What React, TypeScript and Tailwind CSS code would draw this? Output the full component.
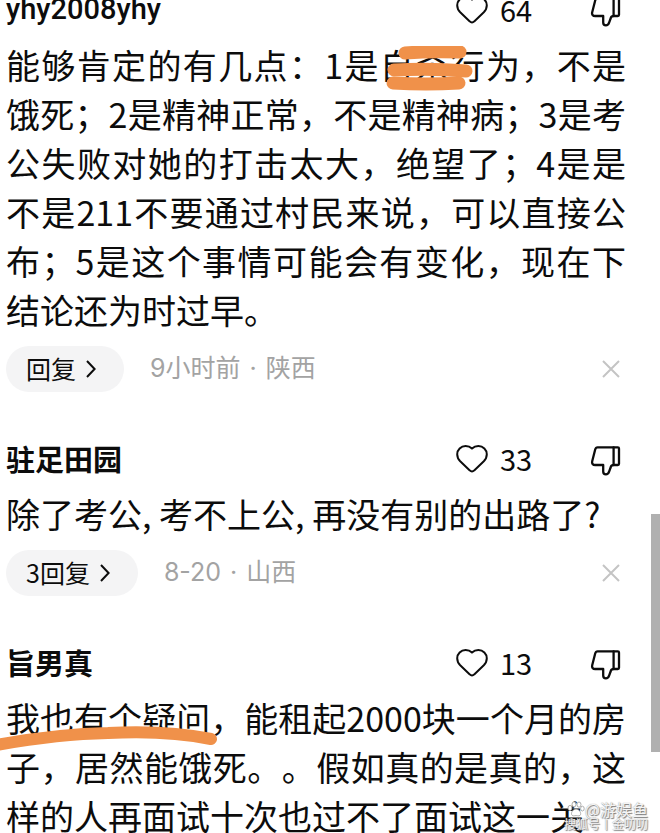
import type { ReactNode } from "react";
import { clsx } from "clsx";

interface Comment {
  author: string;
  likes: number;
  body: ReactNode;
  reply?: { label: string; time: string; region: string };
}

function HeartIcon() {
  return (
    <svg
      viewBox="0 0 32 28"
      className="h-7 w-8"
      fill="none"
      stroke="#0c0c0c"
      strokeWidth="2"
      strokeLinejoin="round"
    >
      <path d="M16 3.6C14.2 1.9 12 1.1 9.6 1.1C4.9 1.1 1.2 4.7 1.2 9.3C1.2 12 2.2 14.3 4.2 16.3L13.8 25.4C15.1 26.7 16.9 26.7 18.2 25.4L27.8 16.3C29.8 14.3 30.8 12 30.8 9.3C30.8 4.7 27.1 1.1 22.4 1.1C20 1.1 17.8 1.9 16 3.6Z" />
    </svg>
  );
}

function ThumbDownIcon() {
  return (
    <svg
      viewBox="0 0 32 32"
      className="size-8"
      fill="none"
      stroke="#0c0c0c"
      strokeWidth="2.3"
      strokeLinejoin="round"
      strokeLinecap="round"
    >
      <path d="M7.6 2.4H27.8C28.6 2.4 29 2.8 29 3.6V18.8C29 19.6 28.6 20 27.8 20H23.6C22 20 21.2 20.7 20.8 22L19.2 26.4C18.5 28.5 17.4 29.4 15.9 29.4C14.1 29.4 13.2 28.3 13.2 26.5V20H5.2C2.8 20 1.6 18.4 2.2 16.2L5.2 4.5C5.6 3 6.2 2.4 7.6 2.4Z" />
      <path d="M23.6 2.4V20" />
    </svg>
  );
}

function CommentItem({ author, likes, body, reply }: Comment) {
  const isLatin = /^[\w-]+$/.test(author);

  return (
    <article className="pb-[47px]">
      <header className="flex h-10 items-center">
        <h2
          className={clsx(
            "flex-1 text-[29px]",
            isLatin ? "font-[Roboto,sans-serif] font-medium" : "font-bold"
          )}
        >
          {author}
        </h2>
        <button
          type="button"
          aria-label={`赞 ${likes}`}
          className="flex w-[134px] items-center gap-3 text-[29px]"
        >
          <HeartIcon />
          {likes}
        </button>
        <button type="button" aria-label="踩" className="mr-1 pt-1">
          <ThumbDownIcon />
        </button>
      </header>
      <p className="mt-[10px] text-justify text-[34px] leading-[49px]">
        {body}
      </p>
      {reply && (
        <footer className="mt-3 flex h-[46px] items-center text-[25px]">
          <button
            type="button"
            className="flex h-full items-center gap-[10px] rounded-full bg-[#f4f4f5] pr-7 pl-5"
          >
            {reply.label}
            <svg
              viewBox="0 0 10 18"
              className="h-[18px] w-[10px]"
              fill="none"
              stroke="#0c0c0c"
              strokeWidth="2"
            >
              <path d="M1 1L8.6 9L1 17" />
            </svg>
          </button>
          <span className="ml-[26px] flex-1 font-[Inter,'Noto_Sans_CJK_SC',sans-serif] text-[#a3a3a3]">
            {reply.time}
            <span className="mx-[2px]"> · </span>
            {reply.region}
          </span>
          <button type="button" aria-label="关闭" className="mr-[6px]">
            <svg
              viewBox="0 0 18 18"
              className="size-[18px]"
              stroke="#c4c4c4"
              strokeWidth="2"
            >
              <path d="M1 1L17 17M17 1L1 17" />
            </svg>
          </button>
        </footer>
      )}
    </article>
  );
}

// Orange marker strokes covering two characters
function Redacted({ children }: { children: ReactNode }) {
  return (
    <span className="relative">
      {children}
      <svg
        viewBox="0 0 88 46"
        className="absolute top-[6px] left-[6px] h-[46px] w-[88px]"
        fill="none"
        stroke="#f0914a"
        strokeWidth="13"
        strokeLinecap="round"
      >
        <path d="M19 7Q45 5 74 6" />
        <path d="M8 24Q45 22 80 25" />
        <path d="M7 37Q40 39 73 37" />
      </svg>
    </span>
  );
}

const comments: Comment[] = [
  {
    author: "yhy2008yhy",
    likes: 64,
    body: (
      <>
        能够肯定的有几点：1是<Redacted>自杀</Redacted>
        行为，不是饿死；2是精神正常，不是精神病；3是考公失败对她的打击太大，绝望了；4是是不是211不要通过村民来说，可以直接公布；5是这个事情可能会有变化，现在下结论还为时过早。
      </>
    ),
    reply: { label: "回复", time: "9小时前", region: "陕西" },
  },
  {
    author: "驻足田园",
    likes: 33,
    body: "除了考公, 考不上公, 再没有别的出路了?",
    reply: { label: "3回复", time: "8-20", region: "山西" },
  },
  {
    author: "旨男真",
    likes: 13,
    body: (
      <span className="relative">
        我也有个疑问，能租起2000块一个月的房子，居然能饿死。。假如真的是真的，这样的人再面试十次也过不了面试这一关
        <svg
          viewBox="0 0 224 30"
          className="absolute top-8 -left-2 h-[30px] w-[224px]"
          fill="none"
          stroke="#f0914a"
          strokeWidth="12"
          strokeLinecap="round"
        >
          <path d="M-2 20Q60 9 110 8Q168 5 213 14" />
        </svg>
      </span>
    ),
  },
];

function Watermark() {
  return (
    <div className="absolute right-3 bottom-[2px] text-white/90 [text-shadow:0_0_1px_#888,1px_1px_1px_#777]">
      <div className="flex items-center justify-end text-[16px] leading-4">
        <svg
          viewBox="0 0 18 16"
          className="h-4 w-[18px]"
          fill="#fff"
          stroke="#999"
          strokeWidth="0.8"
        >
          <ellipse cx="3" cy="7" rx="2" ry="2.6" />
          <ellipse cx="7" cy="3.4" rx="2" ry="2.6" />
          <ellipse cx="12" cy="3.6" rx="2" ry="2.6" />
          <ellipse cx="15.4" cy="7.6" rx="1.8" ry="2.4" />
          <path d="M9 8C6.5 8 4 11 4.6 13.4C5.2 15.6 7.4 14.6 9.2 14.6S13 15.6 13.6 13.4C14.2 11 11.5 8 9 8Z" />
        </svg>
        @游娱鱼
      </div>
      <div className="text-right text-[12px] leading-[14px]">搜狐号丨金叨叨</div>
    </div>
  );
}

export default function App() {
  return (
    <main className="relative h-screen overflow-hidden bg-white font-['Noto_Sans_CJK_SC',sans-serif] text-[#0c0c0c] [text-spacing-trim:space-all]">
      <div className="-mt-[10px] pr-[34px] pl-[6px]">
        {comments.map((comment) => (
          <CommentItem key={comment.author} {...comment} />
        ))}
      </div>
      <div className="absolute top-[514px] right-0 h-[238px] w-[9px] bg-[#b0b0b0]" />
      <Watermark />
    </main>
  );
}
